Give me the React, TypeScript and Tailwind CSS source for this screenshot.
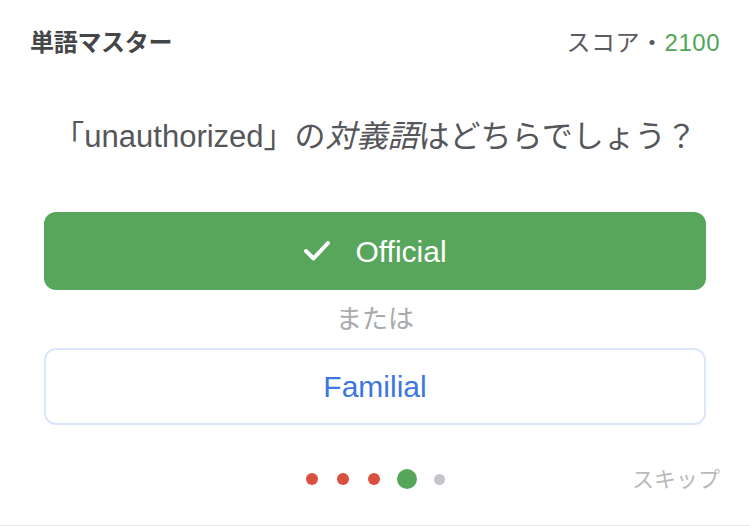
import React from "react";

const font = {
  fontFamily:
    '"Liberation Sans", "Noto Sans CJK JP", Arial, sans-serif',
};

export default function App() {
  return (
    <div
      className="w-[750px] h-[526px] bg-white flex flex-col border-b border-[#e8e8e8] overflow-hidden"
      style={font}
    >
      <header className="h-[86px] flex items-center justify-between pl-[30px] pr-[30px]">
        <h1 className="text-[24px] font-bold text-[#454648] tracking-[-0.3px]">
          単語マスター
        </h1>
        <div className="text-[24px] text-[#5a5b5e] tracking-[0.5px]">
          スコア・<span className="text-[#4fa656]">2100</span>
        </div>
      </header>

      <div className="h-[102px] flex items-center justify-center">
        <p className="text-[31px] text-[#55565a]">
          「unauthorized」の<i>対義語</i>はどちらでしょう？
        </p>
      </div>

      <div className="px-[44px] mt-[24px]">
        <button className="w-full h-[78px] rounded-[12px] bg-[#57a65b] flex items-center justify-center gap-[24px] text-white text-[30px]">
          <svg width="28" height="24" viewBox="0 0 28 24" fill="none">
            <polyline
              points="3,12 10.5,19.5 25,4"
              stroke="white"
              strokeWidth="4"
              strokeLinecap="round"
              strokeLinejoin="round"
            />
          </svg>
          <span>Official</span>
        </button>

        <div className="h-[58px] flex items-center justify-center text-[26px] text-[#a9aaac]">
          または
        </div>

        <button className="w-full h-[77px] rounded-[12px] border-2 border-[#dbe6fb] bg-white flex items-center justify-center text-[30px] text-[#3c76de]">
          Familial
        </button>
      </div>

      <div className="mt-[34px] h-[40px] grid grid-cols-[1fr_auto_1fr] items-center">
        <div />
        <div className="flex items-center">
          <span className="w-[12px] h-[12px] rounded-full bg-[#d9503f]" />
          <span className="ml-[19px] w-[12px] h-[12px] rounded-full bg-[#d9503f]" />
          <span className="ml-[19px] w-[12px] h-[12px] rounded-full bg-[#d9503f]" />
          <span className="ml-[17px] w-[20px] h-[20px] rounded-full bg-[#56a65a]" />
          <span className="ml-[17px] w-[11px] h-[11px] rounded-full bg-[#c3c5ca]" />
        </div>
        <div className="text-right text-[22px] text-[#b9babc] pr-[30px]">スキップ</div>
      </div>
    </div>
  );
}
